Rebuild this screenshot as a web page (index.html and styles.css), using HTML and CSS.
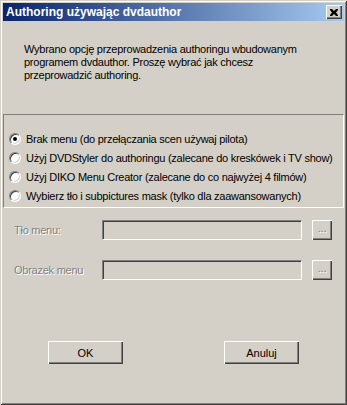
FILE: index.html
```html
<!DOCTYPE html>
<html lang="pl">
  <head>
    <meta charset="UTF-8" />
    <title>Authoring używając dvdauthor</title>
    <link rel="stylesheet" href="styles.css">
  </head>
  <body>
    <div class="window">
      <div class="titlebar">
        <span class="title">Authoring używając dvdauthor</span>
        <button class="close" type="button">
          <svg width="8" height="7" viewBox="0 0 8 7">
            <path d="M0 0h2l2 2 2-2h2v1L6 3.5 8 6v1H6L4 5 2 7H0V6l2-2.5L0 1z" fill="#000"/>
          </svg>
        </button>
      </div>

      <p class="intro">
        Wybrano opcję przeprowadzenia authoringu wbudowanym<br />
        programem dvdauthor. Proszę wybrać jak chcesz<br />
        przeprowadzić authoring.
      </p>

      <div class="choices">
        <label class="choice"><span class="radio checked"></span>Brak menu (do przełączania scen używaj pilota)</label>
        <label class="choice"><span class="radio"></span>Użyj DVDStyler do authoringu (zalecane do kreskówek i TV show)</label>
        <label class="choice"><span class="radio"></span>Użyj DIKO Menu Creator (zalecane do co najwyżej 4 filmów)</label>
        <label class="choice"><span class="radio"></span>Wybierz tło i subpictures mask (tylko dla zaawansowanych)</label>
      </div>

      <div class="fields">
        <div class="field">
          <span class="field-label">Tło menu:</span>
          <span class="field-input"></span>
          <span class="browse">...</span>
        </div>
        <div class="field">
          <span class="field-label">Obrazek menu</span>
          <span class="field-input"></span>
          <span class="browse">...</span>
        </div>
      </div>

      <div class="actions">
        <button class="btn" type="button">OK</button>
        <button class="btn" type="button">Anuluj</button>
      </div>
    </div>
  </body>
</html>
```

FILE: styles.css
```css
body {
  margin: 0;
  font-family: "Liberation Sans", Arial, sans-serif;
  font-size: 11px;
  letter-spacing: -0.25px;
  background-color: #d4d0c8;
  color: #000;
}

.window {
  box-sizing: border-box;
  width: 347px;
  height: 405px;
  padding: 3px;
  background-color: #d4d0c8;
  box-shadow: inset 1px 1px #d4d0c8, inset -1px -1px #404040,
    inset 2px 2px #fff, inset -2px -2px #808080;
  display: flex;
  flex-direction: column;
}

.titlebar {
  height: 18px;
  display: flex;
  align-items: center;
  justify-content: space-between;
  padding: 0 2px 0 3px;
  background: linear-gradient(to right, #0a246a, #a6caf0);
}

.title {
  color: #fff;
  font-weight: bold;
  font-size: 12px;
  letter-spacing: 0;
}

.close {
  width: 16px;
  height: 14px;
  padding: 0;
  display: flex;
  align-items: center;
  justify-content: center;
  background-color: #d4d0c8;
  border: 0;
  box-shadow: inset 1px 1px #fff, inset -1px -1px #404040,
    inset -2px -2px #808080;
}

.intro {
  margin: 22px 0 0 21px;
  line-height: 13px;
  height: 71px;
}

.choices {
  border-top: 1px solid #808080;
  border-left: 1px solid #808080;
  border-right: 1px solid #fff;
  border-bottom: 1px solid #fff;
  padding: 14px 0 2px 5px;
}

.choice {
  height: 19px;
  display: flex;
  align-items: center;
  gap: 5px;
  white-space: nowrap;
}

.radio {
  box-sizing: border-box;
  flex: none;
  width: 12px;
  height: 12px;
  border-radius: 50%;
  background-color: #fff;
  border: 1px solid;
  border-color: #808080 #fff #fff #808080;
  box-shadow: inset 1px 1px #404040, inset -1px -1px #d4d0c8;
  display: flex;
  align-items: center;
  justify-content: center;
}

.radio.checked::after {
  content: "";
  width: 4px;
  height: 4px;
  border-radius: 50%;
  background-color: #000;
}

.fields {
  margin-top: 12px;
  display: flex;
  flex-direction: column;
  gap: 20px;
}

.field {
  display: flex;
  align-items: center;
  height: 20px;
  padding-left: 11px;
}

.field-label {
  width: 88px;
  color: #808080;
  text-shadow: 1px 1px #fff;
}

.field-input {
  box-sizing: border-box;
  width: 200px;
  height: 20px;
  border: 1px solid;
  border-color: #808080 #fff #fff #808080;
  box-shadow: inset 1px 1px #404040;
}

.browse {
  box-sizing: border-box;
  width: 20px;
  height: 20px;
  margin-left: 10px;
  line-height: 16px;
  text-align: center;
  color: #808080;
  text-shadow: 1px 1px #fff;
  box-shadow: inset 1px 1px #fff, inset -1px -1px #404040,
    inset -2px -2px #808080;
}

.actions {
  margin-top: 61px;
  display: flex;
  padding-left: 45px;
  gap: 101px;
}

.btn {
  width: 75px;
  height: 23px;
  padding: 0;
  border: 0;
  font-family: inherit;
  font-size: 11px;
  color: #000;
  background-color: #d4d0c8;
  box-shadow: inset 1px 1px #fff, inset -1px -1px #404040,
    inset -2px -2px #808080;
}
```
